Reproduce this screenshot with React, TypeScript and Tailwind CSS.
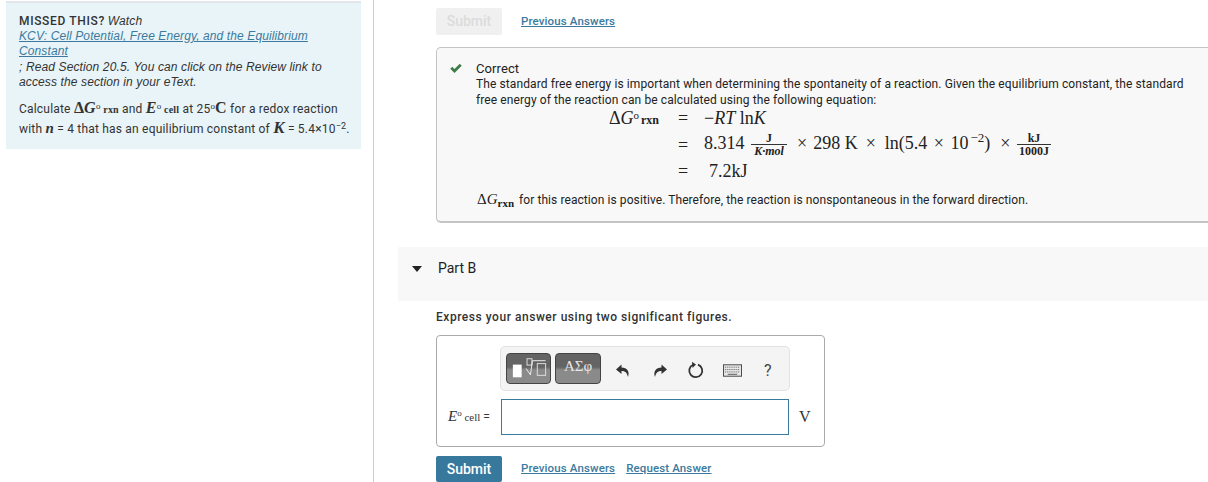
const SANS = "font-['Roboto',Arial,sans-serif]";
const ITALIC = "font-['Liberation_Sans',Arial,sans-serif] italic";

function Var({ children, className = '' }: { children: React.ReactNode; className?: string }) {
  return <span className={`font-['Liberation_Serif',serif] italic ${className}`}>{children}</span>;
}

function Rm({ children, className = '' }: { children: React.ReactNode; className?: string }) {
  return <span className={`font-['Liberation_Serif',serif] ${className}`}>{children}</span>;
}

function Deg({ className = '' }: { className?: string }) {
  return <sup className={`font-['Liberation_Serif',serif] text-[9px] not-italic ${className}`}>o</sup>;
}

function Fraction({ top, bottom, width }: { top: React.ReactNode; bottom: React.ReactNode; width: string }) {
  return (
    <span className={`inline-flex flex-col items-center align-middle font-['Liberation_Serif',serif] text-[12px] leading-[12px] font-bold ${width}`}>
      <span className="w-full border-b border-[#333] text-center">{top}</span>
      <span className="text-center whitespace-nowrap">{bottom}</span>
    </span>
  );
}

function Sidebar() {
  return (
    <div className="h-[482px] w-[374px] shrink-0 border-r border-[#c9ced6] pt-px pr-3 pl-[6px]">
      <div className="h-[148px] border-t-2 border-[#e2e6ea] bg-[#e9f4f8] pt-[11px] pl-[13px] text-[12px] leading-[15.2px] text-[#333]">
        <div>
          <span className="font-medium tracking-[0.65px]">MISSED THIS?</span> <em className={`${ITALIC} tracking-[0.1px]`}>Watch</em>
        </div>
        <a className={`block w-[300px] tracking-[0.11px] text-[#3b7a9e] underline ${ITALIC}`}>KCV: Cell Potential, Free Energy, and the Equilibrium Constant</a>
        <div className={`w-[320px] tracking-[0.12px] ${ITALIC}`}>; Read Section 20.5. You can click on the Review link to access the section in your eText.</div>
        <div className="mt-[9px] leading-[18px] tracking-[0.2px] whitespace-nowrap">
          <div>
            Calculate <Rm className="text-[16px] font-bold">Δ<i>G</i></Rm>
            <Deg />
            <Rm className="text-[10px] font-bold"> rxn</Rm> and <Var className="text-[16px] font-bold">E</Var>
            <Deg />
            <Rm className="text-[10px] font-bold"> cell</Rm> at 25<Deg />
            <Rm className="text-[16px] font-bold">C</Rm> for a redox reaction
          </div>
          <div>
            with <Var className="text-[15px] font-bold">n</Var> = 4 that has an equilibrium constant of{' '}
            <Var className="text-[17px] font-bold">K</Var> = 5.4×10<sup className="text-[9px]">−2</sup>.
          </div>
        </div>
      </div>
    </div>
  );
}

function EquationRow({ lhs, children }: { lhs?: React.ReactNode; children: React.ReactNode }) {
  return (
    <div className="flex h-[26.5px] items-center font-['Liberation_Serif',serif] text-[18px] leading-none text-[#222]">
      <div className="w-[230px] text-right whitespace-nowrap">{lhs}</div>
      <div className="ml-[17px] w-[14px] text-center">=</div>
      <div className="ml-[14px] whitespace-nowrap">{children}</div>
    </div>
  );
}

function CorrectBox() {
  return (
    <div className="mt-3 h-[176px] rounded-l-[5px] border border-r-0 border-b-2 border-[#c4c4c4] bg-[#f8f8f8] pt-[13px] pl-[12px] text-[12px] text-[#222]">
      <div className="flex">
        <svg viewBox="0 0 16 13" className="mt-[2px] h-[11px] w-[14px] shrink-0">
          <path d="M1.2 6.8 L3.6 4.4 L6.2 7 L12.4 .8 L14.8 3.2 L6.2 11.8 Z" fill="#3e7d4a" />
        </svg>
        <div className="ml-[13px]">
          <div className="text-[13px] leading-[15px] tracking-[0.1px]">Correct</div>
          <div className="w-[720px] leading-[16px] tracking-[0.1px]">
            The standard free energy is important when determining the spontaneity of a reaction. Given the equilibrium constant, the standard free energy of the reaction can be calculated using the following equation:
          </div>
        </div>
      </div>
      <div className="-mt-[3px] ml-[-20px]">
        <EquationRow
          lhs={
            <>
              Δ<i>G</i>
              <sup className="text-[11px]">o</sup>
              <span className="ml-[2px] text-[12px] font-bold">rxn</span>
            </>
          }
        >
          −<i>RT</i> ln<i>K</i>
        </EquationRow>
        <EquationRow>
          8.314 <Fraction width="w-[36px] ml-[2px]" top="J" bottom={<i>K·mol</i>} />
          <span className="ml-[10px]">×</span>
          <span className="ml-[6px]">298 K</span>
          <span className="ml-[8px]">×</span>
          <span className="ml-[9px]">
            ln(5.4<span className="mx-[2px]"> × </span>10<sup className="ml-[2px] text-[13px]">−2</sup>)
          </span>
          <span className="ml-[10px]">×</span> <Fraction width="w-[34px] ml-[2px]" top="kJ" bottom="1000J" />
        </EquationRow>
        <EquationRow>
          <span className="ml-[5px]">7.2kJ</span>
        </EquationRow>
      </div>
      <div className="mt-[3px] ml-[28px] flex items-baseline whitespace-nowrap">
        <Rm className="text-[15px]">
          Δ<i>G</i>
          <span className="align-[-3px] text-[11px] font-bold">rxn</span>
        </Rm>
        <span className="ml-[5px] tracking-[0.08px]">for this reaction is positive. Therefore, the reaction is nonspontaneous in the forward direction.</span>
      </div>
    </div>
  );
}

function Toolbar() {
  const btn = 'flex h-[31px] items-center justify-center rounded-[4px] border border-[#444] bg-[linear-gradient(#646464_0%,#646464_45%,#8a8a8a_55%,#8a8a8a_100%)]';
  return (
    <div className="ml-[63px] flex h-[45px] w-[290px] items-center rounded-[5px] border border-[#e2e2e2] bg-[#f4f4f4] pl-[5px]">
      <div className={`${btn} w-[45px]`}>
        <svg viewBox="0 0 44 28" className="h-[28px] w-[44px]">
          <rect x="6" y="9.5" width="9" height="13" fill="#fff" />
          <rect x="20.5" y="3.5" width="5" height="6.5" fill="none" stroke="#ddd" />
          <path d="M19.5 13.5 L24 20 L26 5.5 L39.5 5.5" fill="none" stroke="#eee" strokeWidth="1" />
          <rect x="31" y="8.5" width="8.5" height="12" fill="none" stroke="#ddd" />
        </svg>
      </div>
      <div className={`${btn} ml-[4px] w-[46px] pb-[5px] font-['Liberation_Serif',serif] text-[15px] text-[#e8e8e8]`}>ΑΣφ</div>
      <svg viewBox="0 0 16 16" className="mt-[4px] ml-[14px] h-[16px] w-[16px]">
        <path d="M6.5 1.5 L1 6.5 L6.5 11 V8 C10 8 12 9.5 13 14 C15 8.5 12 4.8 6.5 4.6 Z" fill="#333" />
      </svg>
      <svg viewBox="0 0 16 16" className="mt-[4px] ml-[21px] h-[16px] w-[16px]">
        <path d="M9.5 1.5 L15 6.5 L9.5 11 V8 C6 8 4 9.5 3 14 C1 8.5 4 4.8 9.5 4.6 Z" fill="#333" />
      </svg>
      <svg viewBox="0 0 18 18" className="mt-[3px] ml-[19px] h-[18px] w-[18px]">
        <path d="M11 3.6 A6.5 6.5 0 1 1 6 3.8" fill="none" stroke="#333" strokeWidth="1.8" />
        <path d="M5 0.8 L9 3.6 L5.5 7 Z" fill="#333" />
      </svg>
      <svg viewBox="0 0 20 13" className="mt-[4px] ml-[18px] h-[13px] w-[19px]">
        <rect x=".5" y=".5" width="19" height="12" fill="#e8e8e8" stroke="#444" />
        <path d="M2 3h16M2 5.5h16M2 8h16" stroke="#555" strokeDasharray="1 1" />
        <path d="M5 10.5h10" stroke="#555" />
      </svg>
      <span className="mt-[4px] ml-[22px] text-[16px] text-[#444]">?</span>
    </div>
  );
}

function AnswerBox() {
  return (
    <div className="mt-[10px] h-[112px] w-[389px] rounded-[4px] border border-[#aaa] pt-[10px]">
      <Toolbar />
      <div className="mt-[8px] flex items-center">
        <div className="mb-[2px] ml-[11px] w-[53px] text-[12px] whitespace-nowrap text-[#333]">
          <Var className="text-[15px]">E</Var>
          <Deg />
          <Rm className="text-[11px]"> cell</Rm> =
        </div>
        <div className="h-[36px] w-[288px] border border-[#3a7a9c] bg-white" />
        <Rm className="ml-[10px] text-[16px] text-[#333]">V</Rm>
      </div>
    </div>
  );
}

function ActionRow({ disabled, links }: { disabled?: boolean; links: string[] }) {
  return (
    <div className="flex items-center">
      <button
        className={
          disabled
            ? 'h-[27px] w-[66px] rounded-[2px] bg-[#f0f0f0] text-[14px] font-medium text-[#dcdcdc]'
            : 'h-[26px] w-[66px] rounded-[2px] bg-[#37799c] text-[14px] font-medium text-white'
        }
      >
        Submit
      </button>
      <div className="ml-[19px] flex gap-[11px]">
        {links.map((l) => (
          <a key={l} className="text-[11.5px] font-medium tracking-[0.12px] text-[#3b7a9e] underline">
            {l}
          </a>
        ))}
      </div>
    </div>
  );
}

export default function App() {
  return (
    <div className={`flex h-[482px] w-[1208px] overflow-hidden bg-white ${SANS}`}>
      <Sidebar />
      <div className="min-w-0 flex-1 pt-2">
        <div className="ml-[62px]">
          <ActionRow disabled links={['Previous Answers']} />
          <CorrectBox />
        </div>
        <div className="mt-[24px] ml-[24px] flex h-[54px] items-center bg-[#f8f8f8] pb-[11px]">
          <svg viewBox="0 0 10 6" className="ml-[14px] h-[6px] w-[10px]">
            <path d="M0 0 H10 L5 6 Z" fill="#222" />
          </svg>
          <span className="ml-[16px] text-[14px] text-[#222]">Part B</span>
        </div>
        <div className="ml-[62px]">
          <div className="mt-[9px] text-[12px] leading-[15px] font-medium tracking-[0.54px] text-[#333]">Express your answer using two significant figures.</div>
          <AnswerBox />
          <div className="mt-[9px]">
            <ActionRow links={['Previous Answers', 'Request Answer']} />
          </div>
        </div>
      </div>
    </div>
  );
}
